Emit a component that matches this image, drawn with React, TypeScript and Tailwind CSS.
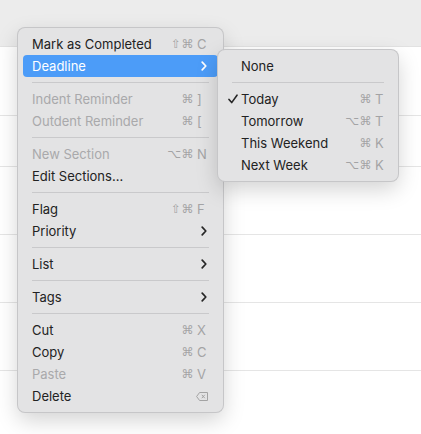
import React from "react";

type Item =
  | { sep: true }
  | {
      sep?: false;
      label: string;
      mods?: string;
      key?: string;
      del?: boolean;
      disabled?: boolean;
      sub?: boolean;
      active?: boolean;
      checked?: boolean;
    };

const mainItems: Item[] = [
  { label: "Mark as Completed", mods: "⇧⌘", key: "C" },
  { label: "Deadline", sub: true, active: true },
  { sep: true },
  { label: "Indent Reminder", mods: "⌘", key: "]", disabled: true },
  { label: "Outdent Reminder", mods: "⌘", key: "[", disabled: true },
  { sep: true },
  { label: "New Section", mods: "⌥⌘", key: "N", disabled: true },
  { label: "Edit Sections…" },
  { sep: true },
  { label: "Flag", mods: "⇧⌘", key: "F" },
  { label: "Priority", sub: true },
  { sep: true },
  { label: "List", sub: true },
  { sep: true },
  { label: "Tags", sub: true },
  { sep: true },
  { label: "Cut", mods: "⌘", key: "X" },
  { label: "Copy", mods: "⌘", key: "C" },
  { label: "Paste", mods: "⌘", key: "V", disabled: true },
  { label: "Delete", del: true },
];

const subItems: Item[] = [
  { label: "None" },
  { sep: true },
  { label: "Today", mods: "⌘", key: "T", checked: true },
  { label: "Tomorrow", mods: "⌥⌘", key: "T" },
  { label: "This Weekend", mods: "⌘", key: "K" },
  { label: "Next Week", mods: "⌥⌘", key: "K" },
];

const Chevron = ({ white }: { white?: boolean }) => (
  <svg width="6" height="10" viewBox="0 0 6 10" className="block">
    <path
      d="M1.2 1.2 L4.8 5 L1.2 8.8"
      fill="none"
      stroke={white ? "#ffffff" : "#262626"}
      strokeWidth="1.7"
      strokeLinecap="round"
      strokeLinejoin="round"
    />
  </svg>
);

const DeleteIcon = () => (
  <svg width="12" height="9" viewBox="0 0 12 9" className="block">
    <path
      d="M3.6 0.5 H11.5 V8.5 H3.6 L0.6 4.5 Z"
      fill="none"
      stroke="#a3a3a3"
      strokeWidth="1"
      strokeLinejoin="round"
    />
    <path d="M5.8 2.8 L8.8 6.2 M8.8 2.8 L5.8 6.2" stroke="#a3a3a3" strokeWidth="1" />
  </svg>
);

const Check = () => (
  <svg width="10" height="10" viewBox="0 0 10 10" className="block">
    <path
      d="M1 5.4 L3.7 8.6 L9 1.2"
      fill="none"
      stroke="#262626"
      strokeWidth="1.6"
      strokeLinecap="round"
      strokeLinejoin="round"
    />
  </svg>
);

function Menu({ items, isSub }: { items: Item[]; isSub?: boolean }) {
  return (
    <div className="flex flex-col py-[5px]">
      {items.map((it, i) => {
        if (it.sep) {
          return (
            <div key={i} className="h-[11px] flex items-center px-[14px]">
              <div className="h-px w-full bg-[#c9c9cb]" />
            </div>
          );
        }
        const textColor = it.active
          ? "text-white"
          : it.disabled
          ? "text-[#a9a9ab]"
          : "text-[#222222]";
        return (
          <div
            key={i}
            className={`mx-[5px] h-[22px] rounded-[4px] flex items-center ${
              it.active ? "bg-[#4c9cf8]" : ""
            } ${isSub ? "pl-[18px] pr-[9px]" : "pl-[9px] pr-[11px]"} relative`}
          >
            {it.checked && (
              <div className="absolute left-[5px] top-[6px]">
                <Check />
              </div>
            )}
            <span className={`flex-1 text-[13px] leading-none ${textColor}`}>{it.label}</span>
            {it.sub && <Chevron white={it.active} />}
            {it.key && (
              <div className="flex items-center text-[#a3a3a5]">
                <span className="text-[12px] leading-none tracking-[0.5px] font-['DejaVu_Sans',sans-serif] mr-[3px]">
                  {it.mods}
                </span>
                <span className={`${isSub ? "w-[9px]" : "w-[10px]"} text-[13px] leading-none`}>{it.key}</span>
              </div>
            )}
            {it.del && (
              <div className="mr-[-1px]">
                <DeleteIcon />
              </div>
            )}
          </div>
        );
      })}
    </div>
  );
}

export default function App() {
  return (
    <div className="relative w-[421px] h-[434px] overflow-hidden bg-white font-['Inter',sans-serif]">
      <div className="flex flex-col">
        <div className="h-[47px] bg-[#ececec] border-b border-[#e2e2e2]" />
        <div className="h-[69px] border-b border-[#e5e5e5]" />
        <div className="h-[51px] border-b border-[#e5e5e5]" />
        <div className="h-[68px] border-b border-[#e5e5e5]" />
        <div className="h-[68px] border-b border-[#e5e5e5]" />
        <div className="h-[68px] border-b border-[#e5e5e5]" />
      </div>

      <div className="absolute left-[18px] top-[28px] w-[205px] rounded-[7px] bg-[#e3e3e4] shadow-[0_0_0_1px_#c6c6c8,0_8px_22px_rgba(0,0,0,0.18)]">
        <Menu items={mainItems} />
      </div>

      <div className="absolute left-[218px] top-[50px] w-[180px] rounded-[7px] bg-[#e3e3e4] shadow-[0_0_0_1px_#c6c6c8,0_8px_22px_rgba(0,0,0,0.18)]">
        <Menu items={subItems} isSub />
      </div>
    </div>
  );
}
